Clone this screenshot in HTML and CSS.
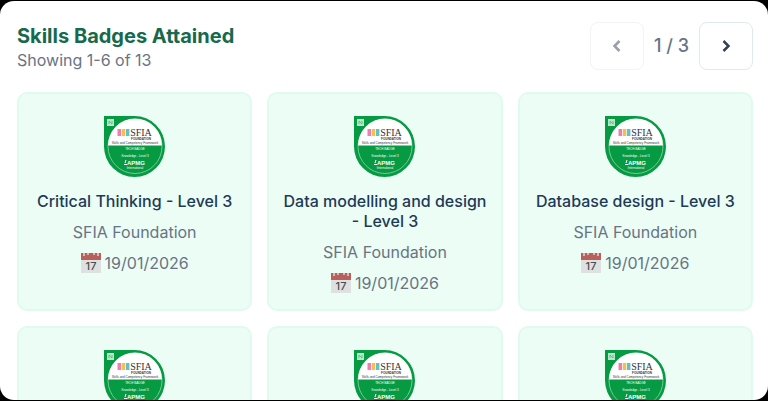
FILE: index.html
```html
<!DOCTYPE html>
<html lang="en">
<head>
  <meta charset="UTF-8">
  <meta name="viewport" content="width=device-width, initial-scale=1.0">
  <title>Skills Badges Attained</title>
  <link rel="stylesheet" href="styles.css">
</head>
<body>
  <main class="panel">
    <header class="panel-header">
      <div>
        <h2>Skills Badges Attained</h2>
        <p>Showing 1-6 of 13</p>
      </div>
      <nav class="pager" aria-label="Badge pages">
        <button type="button" aria-label="Previous page" disabled>
          <svg viewBox="0 0 16 16"><path d="M10 4L6 8L10 12"/></svg>
        </button>
        <span>1 / 3</span>
        <button type="button" aria-label="Next page">
          <svg viewBox="0 0 16 16"><path d="M6 4L10 8L6 12"/></svg>
        </button>
      </nav>
    </header>

    <div class="badge-grid" id="badge-grid"></div>
  </main>

  <script src="badges.js"></script>
</body>
</html>
```
FILE: styles.css
```css
* {
  margin: 0;
  padding: 0;
  box-sizing: border-box;
}

body {
  height: 100vh;
  padding: 1px 0;
  background: #000;
  font-family: Inter, "Liberation Sans", sans-serif;
  font-size: 16px;
  line-height: 20px;
  color: #687484;
  overflow: hidden;
}

.panel {
  height: 100%;
  padding: 21px 15px 0 17px;
  background: #fff;
  border-radius: 14px;
  overflow: hidden;
}

.panel-header {
  display: flex;
  justify-content: space-between;
  align-items: center;
  margin-bottom: 22px;
}

h2 {
  font-size: 20px;
  font-weight: 700;
  line-height: 28px;
  color: #17694c;
}

.pager {
  display: flex;
  align-items: center;
  gap: 10px;
  font-size: 18px;
  font-weight: 500;
}

.pager button {
  display: flex;
  align-items: center;
  justify-content: center;
  width: 54px;
  height: 48px;
  background: #fff;
  border: 1px solid #e2e8f0;
  border-radius: 8px;
  color: #334155;
  cursor: pointer;
}

.pager button:disabled {
  opacity: 0.5;
  cursor: default;
}

.pager svg {
  width: 20px;
  height: 20px;
  fill: none;
  stroke: currentColor;
  stroke-width: 2;
}

.badge-grid {
  display: grid;
  grid-template-columns: repeat(3, 1fr);
  gap: 15px;
}

.card {
  min-height: 219px;
  padding: 22px 12px 16px;
  background: #ecfdf5;
  border: 2px solid #e0fbed;
  border-radius: 10px;
  text-align: center;
}

.badge {
  display: block;
  width: 61px;
  height: 61px;
  margin: 0 auto 14px;
  font-family: "Liberation Sans", sans-serif;
}

.card h3 {
  font-size: 16px;
  font-weight: 500;
  color: #1e3a56;
}

.card p {
  margin-top: 11px;
}

.card .date {
  display: flex;
  align-items: center;
  justify-content: center;
  gap: 4px;
}

.date svg {
  width: 20px;
  height: 20px;
}
```
FILE: badges.js
```javascript
const badges = [
  { title: 'Critical Thinking - Level 3', issuer: 'SFIA Foundation', date: '19/01/2026' },
  { title: 'Data modelling and design - Level 3', issuer: 'SFIA Foundation', date: '19/01/2026' },
  { title: 'Database design - Level 3', issuer: 'SFIA Foundation', date: '19/01/2026' },
  {},
  {},
  {}
];

const badgeIcon = `
  <svg class="badge" viewBox="0 0 61 61" text-anchor="middle">
    <path d="M0 0H30.5A30.5 30.5 0 1 1 0 30.5Z" fill="#069a43"/>
    <circle cx="31" cy="30.5" r="27" fill="none" stroke="#8fd3aa" stroke-width="0.8"/>
    <path d="M4 29.5A27 27 0 0 1 58 29.5Z" fill="#fff"/>
    <rect x="3" y="3" width="7" height="7" fill="#b9e6cb"/>
    <path d="M5 8V5L8 8V5" fill="none" stroke="#4fb97b" stroke-width="0.8"/>
    <rect x="13.5" y="13" width="3.5" height="7" fill="#ef7fae"/>
    <rect x="17.7" y="13" width="3.5" height="7" fill="#f3c04f"/>
    <rect x="21.9" y="13" width="3.5" height="7" fill="#62c0c6"/>
    <text x="37" y="20" font-family="Liberation Serif, serif" font-size="10" fill="#333">SFIA</text>
    <text x="37" y="23.5" font-size="3" font-weight="700" fill="#333">FOUNDATION</text>
    <text x="31" y="28" font-size="3" fill="#333">Skills and Competency Framework</text>
    <text x="31" y="34" font-size="3" fill="#fff">TECH BADGE</text>
    <text x="31" y="41" font-size="3" fill="#fff">Knowledge - Level 3</text>
    <path d="M20 48.5H23M21 47L22 44" fill="none" stroke="#fff" stroke-width="1"/>
    <text x="32" y="49" font-size="6" font-weight="700" fill="#fff">APMG</text>
    <text x="31" y="53" font-size="3" fill="#fff">International</text>
  </svg>`;

const calendarIcon = `
  <svg viewBox="0 0 20 20">
    <rect width="20" height="20" fill="#dfe1e0"/>
    <rect width="20" height="7" fill="#b8605c"/>
    <path d="M3 0V3M7 0V2M13 0V2M17 0V3" stroke="#e9d3d0" stroke-width="1.5"/>
    <text x="10" y="17" text-anchor="middle" font-size="11" font-weight="500" fill="#4a4f55">17</text>
  </svg>`;

function displayBadges(list) {
  document.getElementById('badge-grid').innerHTML = list.map(badge => `
    <article class="card">
      ${badgeIcon}
      ${badge.title ? `
        <h3>${badge.title}</h3>
        <p>${badge.issuer}</p>
        <p class="date">${calendarIcon}${badge.date}</p>` : ''}
    </article>
  `).join('');
}

displayBadges(badges);
```
